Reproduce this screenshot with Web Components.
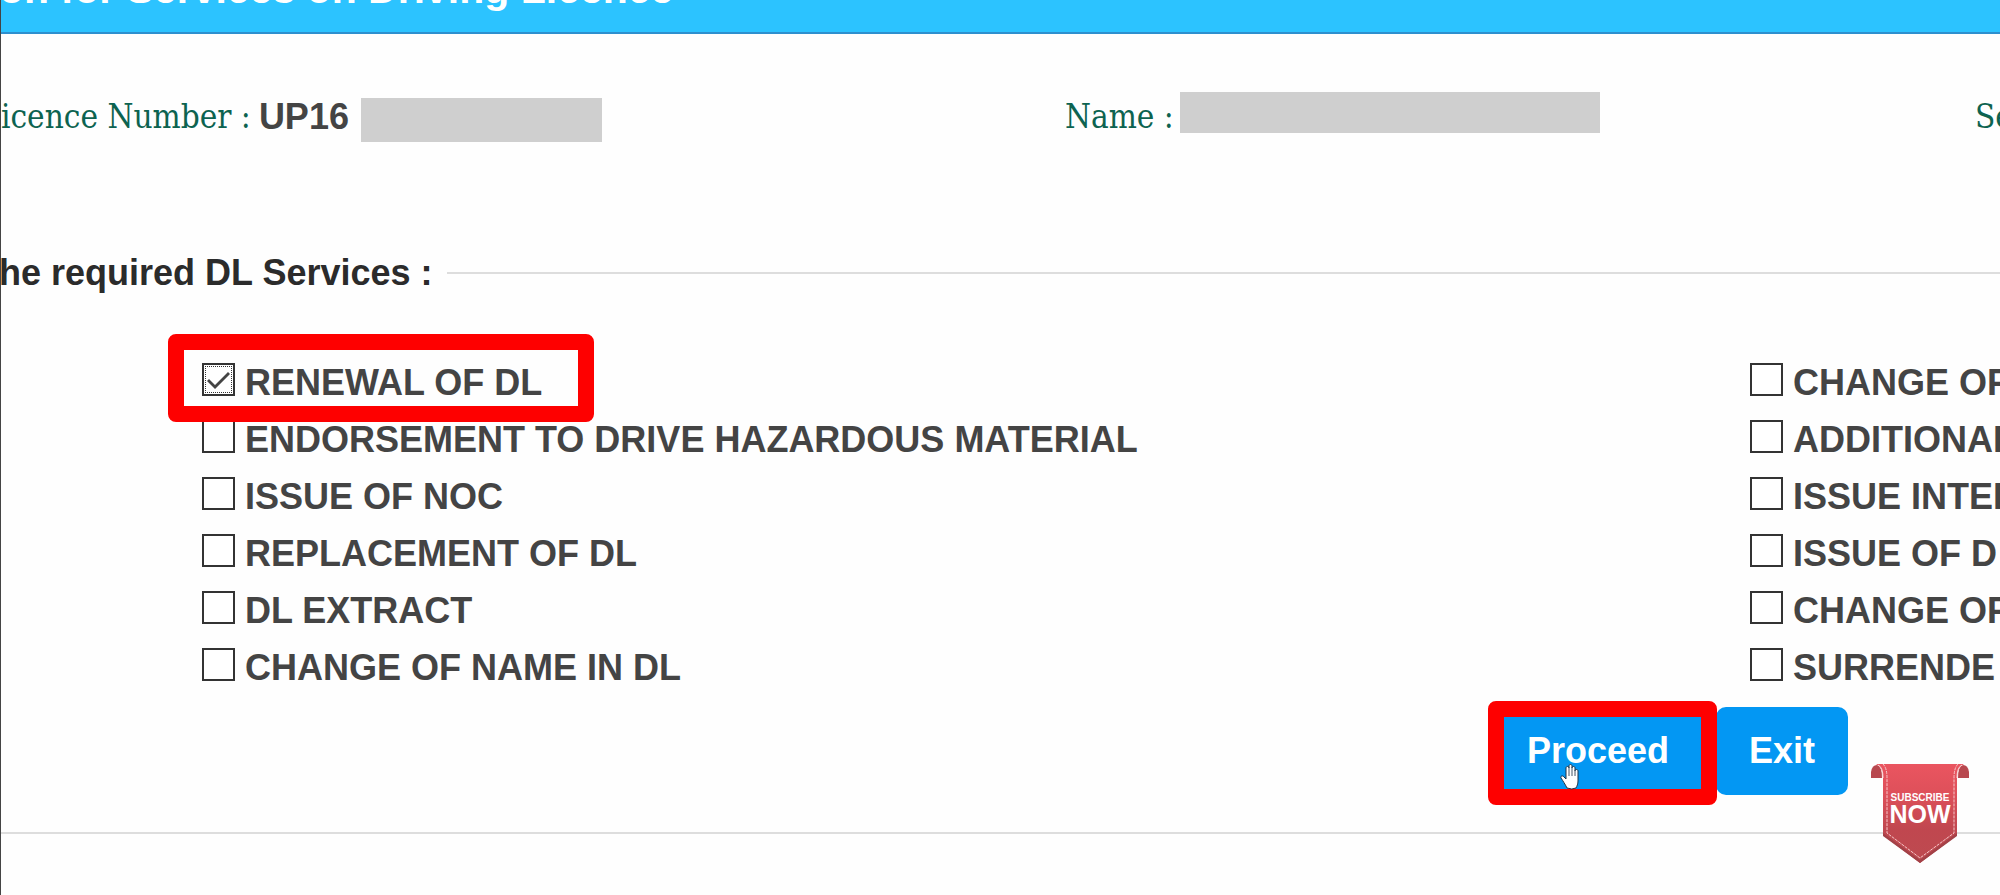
<!DOCTYPE html>
<html lang="en">
<head>
<meta charset="utf-8">
<title>Services on Driving Licence</title>
<style>
  body {
    margin: 0;
    overflow: hidden;
    background: #fefefe;
    font-family: "Liberation Sans", Arial, sans-serif;
  }
</style>
</head>
<body>

<licence-page>
  <page-banner slot="banner">on for Services on Driving Licence</page-banner>

  <info-field slot="info" label="icence Number :" class="number">UP16</info-field>
  <info-field slot="info" label="Name :" class="name"></info-field>
  <info-field slot="info" label="Se" class="plain"></info-field>

  <service-panel slot="services" heading="he required DL Services :">
    <action-button slot="actions" highlight>Proceed</action-button>
    <action-button slot="actions">Exit</action-button>
  </service-panel>

  <subscribe-ribbon slot="badge"></subscribe-ribbon>
</licence-page>

<script>
'use strict';

(function () {

  const SERVICES = [
    { label: 'RENEWAL OF DL', checked: true },
    { label: 'CHANGE OF' },
    { label: 'ENDORSEMENT TO DRIVE HAZARDOUS MATERIAL' },
    { label: 'ADDITIONAL' },
    { label: 'ISSUE OF NOC' },
    { label: 'ISSUE INTER' },
    { label: 'REPLACEMENT OF DL' },
    { label: 'ISSUE OF D' },
    { label: 'DL EXTRACT' },
    { label: 'CHANGE OF' },
    { label: 'CHANGE OF NAME IN DL' },
    { label: 'SURRENDE' }
  ];

  class LicencePage extends HTMLElement {
    constructor() {
      super();
      this.attachShadow({ mode: 'open' }).innerHTML = `
        <style>
          :host {
            display: block;
            position: relative;
            box-sizing: border-box;
            min-height: 100vh;
            overflow: hidden;
            border-left: 1px solid #444;
          }
          .info {
            display: grid;
            grid-template-columns: 1fr 910px 25px;
            align-items: start;
            padding: 61px 0 110px;
          }
        </style>
        <slot name="banner"></slot>
        <main>
          <div class="info"><slot name="info"></slot></div>
          <slot name="services"></slot>
        </main>
        <slot name="badge"></slot>
      `;
    }
  }

  class PageBanner extends HTMLElement {
    constructor() {
      super();
      this.attachShadow({ mode: 'open' }).innerHTML = `
        <style>
          :host {
            display: block;
            overflow: hidden;
            background: #2cc3ff;
            border-bottom: 2px solid #2e8fce;
          }
          h1 {
            margin: -35px 0 0 -2px;
            padding-bottom: 19px;
            font-size: 41px;
            line-height: 48px;
            color: #fff;
            white-space: nowrap;
          }
        </style>
        <h1><slot></slot></h1>
      `;
    }
  }

  class InfoField extends HTMLElement {
    constructor() {
      super();
      this.attachShadow({ mode: 'open' }).innerHTML = `
        <style>
          :host {
            display: flex;
            align-items: flex-start;
            height: 47px;
            line-height: 44px;
            white-space: nowrap;
          }
          .label {
            font-family: "DejaVu Serif Condensed", "Liberation Serif", serif;
            font-size: 33px;
            color: #0d6350;
          }
          .value {
            font-size: 36px;
            font-weight: bold;
            color: #444;
          }
          .mask {
            background: #cfcfcf;
          }
          :host(.number) .label { margin-right: 8px; }
          :host(.number) .mask {
            width: 241px;
            height: 44px;
            margin: 3px 0 0 12px;
          }
          :host(.name) .mask {
            width: 420px;
            height: 41px;
            margin: -3px 0 0 6px;
          }
        </style>
        <span class="label">${this.getAttribute('label')}</span>
        <span class="value"><slot></slot></span>
        <span class="mask"></span>
      `;
    }
  }

  class ServiceOption extends HTMLElement {
    connectedCallback() {
      if (this.shadowRoot) return;
      this.attachShadow({ mode: 'open' }).innerHTML = `
        <style>
          :host {
            display: block;
            position: relative;
            min-width: 0;
          }
          label {
            display: flex;
            align-items: center;
            gap: 10px;
            height: 57px;
            font-size: 36px;
            font-weight: bold;
            color: #444;
            white-space: nowrap;
          }
          input {
            appearance: none;
            position: relative;
            flex: none;
            box-sizing: border-box;
            width: 33px;
            height: 33px;
            margin: 0 0 6px;
            border: 2px solid #333;
            background: #fff;
          }
          input:checked::before {
            content: "";
            position: absolute;
            inset: 1px;
            border: 1px dotted #333;
          }
          input:checked::after {
            content: "";
            position: absolute;
            inset: 0;
            background: #444;
            clip-path: polygon(3px 16px, 5px 14px, 11px 20px, 24px 7px, 26px 9px, 11px 24px);
          }
          .frame {
            position: absolute;
            z-index: 1;
            top: -20px;
            left: -34px;
            box-sizing: border-box;
            width: 426px;
            height: 88px;
            border: 16px solid #fe0000;
            border-radius: 8px;
            pointer-events: none;
          }
        </style>
        <label>
          <input type="checkbox" ${this.hasAttribute('checked') ? 'checked' : ''}>
          <span><slot></slot></span>
        </label>
        ${this.hasAttribute('checked') ? '<div class="frame"></div>' : ''}
      `;
    }
  }

  class ServicePanel extends HTMLElement {
    constructor() {
      super();
      this.attachShadow({ mode: 'open' }).innerHTML = `
        <style>
          :host { display: block; }
          fieldset {
            min-width: 0;
            margin: 0;
            padding: 0;
            border: solid #ddd;
            border-width: 2px 0;
          }
          legend {
            margin-left: -2px;
            padding-right: 14px;
            padding-left: 0;
            font-size: 36px;
            line-height: 42px;
            font-weight: bold;
            color: #2b2b2b;
          }
          .options {
            display: grid;
            grid-template-columns: 1fr 250px;
            padding: 60px 0 0 201px;
          }
          .actions {
            display: flex;
            justify-content: flex-end;
            gap: 14px;
            padding: 11px 152px 37px 0;
          }
        </style>
        <fieldset>
          <legend>${this.getAttribute('heading')}</legend>
          <div class="options">
            ${SERVICES.map(item => `
              <service-option ${item.checked ? 'checked' : ''}>${item.label}</service-option>
            `).join('')}
          </div>
          <div class="actions"><slot name="actions"></slot></div>
        </fieldset>
      `;
    }
  }

  class ActionButton extends HTMLElement {
    constructor() {
      super();
      this.attachShadow({ mode: 'open' }).innerHTML = `
        <style>
          :host {
            display: block;
            position: relative;
          }
          :host([highlight]) { z-index: 1; }
          button {
            height: 88px;
            padding: 0 33px;
            border: 0;
            border-radius: 10px;
            background: #0397f3;
            color: #fff;
            font: bold 36px "Liberation Sans", Arial, sans-serif;
            cursor: pointer;
          }
          .frame {
            position: absolute;
            inset: -6px -15px -10px -6px;
            border: 16px solid #fe0000;
            border-radius: 8px;
            pointer-events: none;
          }
          svg {
            position: absolute;
            left: 66px;
            top: 57px;
          }
        </style>
        <button type="button"><slot></slot></button>
        ${this.hasAttribute('highlight') ? `
          <div class="frame"></div>
          <svg width="21" height="26" viewBox="0 0 21 26" aria-hidden="true">
            <path d="M7 24 C5 20 3 17 1 14 C0 12 3 11 4 13 L6 15 V4 C6 2 9 2 9 4 V2 C9 0 12 0 12 2 V4 C12 2 15 2 15 4 V7 C15 5 18 5 18 7 V17 C18 20 17 22 16 24 Q12 26 7 24 Z"
              fill="#fff" stroke="#234" stroke-width="1"/>
            <path d="M9 4 V12 M12 4 V12 M15 7 V12" stroke="#456" fill="none"/>
          </svg>` : ''}
      `;
    }
  }

  class SubscribeRibbon extends HTMLElement {
    constructor() {
      super();
      this.attachShadow({ mode: 'open' }).innerHTML = `
        <style>
          :host {
            display: block;
            position: absolute;
            z-index: 2;
            right: 30px;
            top: 764px;
          }
          svg { display: block; }
          text {
            font-family: "Liberation Sans", Arial, sans-serif;
            font-weight: bold;
            fill: #fff;
          }
        </style>
        <svg width="99" height="100" viewBox="0 0 99 100">
          <defs>
            <linearGradient id="cloth" x1="0" y1="0" x2="0" y2="1">
              <stop offset="0" stop-color="#ea5560"/>
              <stop offset="0.3" stop-color="#de505a"/>
              <stop offset="0.66" stop-color="#c0474f"/>
              <stop offset="1" stop-color="#bd4a50"/>
            </linearGradient>
          </defs>
          <path d="M0 14 V8 Q1 1 6 1 Q11 2 11 14 Z" fill="#b8484f"/>
          <path d="M98 14 V8 Q97 1 92 1 Q87 2 87 14 Z" fill="#b8484f"/>
          <path d="M5 0 H93 Q86 3 86 14 V71 L49 99 L12 71 V14 Q12 3 5 0 Z" fill="url(#cloth)"/>
          <path d="M12 69 L49 96 L86 69 V72 L49 99 L12 72 Z" fill="#a34147"/>
          <path d="M7 1 Q12 3 12 14 M91 1 Q86 3 86 14" fill="none" stroke="#fbdcdd"/>
          <path d="M12 0 Q16 4 16 14 V69 L49 94 L83 69 V14 Q83 4 87 0" fill="none" stroke="#f7c9cb" stroke-dasharray="3 1"/>
          <text x="49" y="37" font-size="10" text-anchor="middle">SUBSCRIBE</text>
          <text x="49" y="59" font-size="25" text-anchor="middle">NOW</text>
        </svg>
      `;
    }
  }

  customElements.define('licence-page', LicencePage);
  customElements.define('page-banner', PageBanner);
  customElements.define('info-field', InfoField);
  customElements.define('service-option', ServiceOption);
  customElements.define('service-panel', ServicePanel);
  customElements.define('action-button', ActionButton);
  customElements.define('subscribe-ribbon', SubscribeRibbon);
})();
</script>
</body>
</html>
